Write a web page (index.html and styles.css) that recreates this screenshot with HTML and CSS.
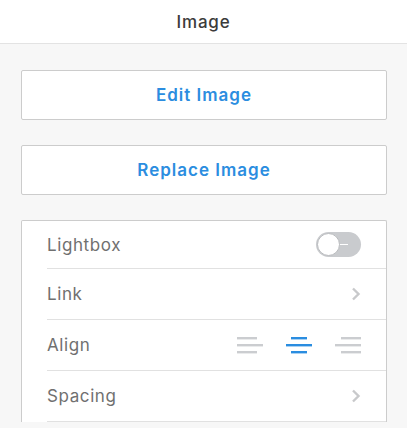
FILE: index.html
```html
<!DOCTYPE html>
<html>
<head>
<meta charset="utf-8">
<link rel="stylesheet" href="styles.css">
</head>
<body>
<header class="header">Image</header>
<main class="content">
  <button class="btn">Edit Image</button>
  <button class="btn">Replace Image</button>
  <section class="panel">
    <div class="row">
      <span class="label">Lightbox</span>
      <span class="toggle"><span class="knob"></span><span class="dash"></span></span>
    </div>
    <div class="row">
      <span class="label">Link</span>
      <svg class="chev" width="10" height="14" viewBox="0 0 10 14"><path d="M2 1.5 L7.5 7 L2 12.5" fill="none" stroke="#c8c9cb" stroke-width="2.4"/></svg>
    </div>
    <div class="row">
      <span class="label">Align</span>
      <div class="aligns">
        <svg width="26" height="18" viewBox="0 0 26 18"><g fill="#cbcdd0"><rect x="0" y="1" width="20" height="2.4"/><rect x="0" y="8" width="26" height="2.4"/><rect x="0" y="15" width="20" height="2.4"/></g></svg>
        <svg width="26" height="18" viewBox="0 0 26 18"><g fill="#2a8de0"><rect x="5" y="1" width="16" height="2.4"/><rect x="0" y="8" width="26" height="2.4"/><rect x="5" y="15" width="16" height="2.4"/></g></svg>
        <svg width="26" height="18" viewBox="0 0 26 18"><g fill="#cbcdd0"><rect x="6" y="1" width="20" height="2.4"/><rect x="0" y="8" width="26" height="2.4"/><rect x="6" y="15" width="20" height="2.4"/></g></svg>
      </div>
    </div>
    <div class="row">
      <span class="label">Spacing</span>
      <svg class="chev" width="10" height="14" viewBox="0 0 10 14"><path d="M2 1.5 L7.5 7 L2 12.5" fill="none" stroke="#c8c9cb" stroke-width="2.4"/></svg>
    </div>
  </section>
</main>
</body>
</html>
```
FILE: styles.css
```css
html, body {
  margin: 0;
  padding: 0;
  background: #f7f7f7;
  font-family: Inter, Lato, "Liberation Sans", sans-serif;
}
.header {
  height: 43px;
  background: #ffffff;
  border-bottom: 1px solid #e3e3e3;
  display: flex;
  align-items: center;
  justify-content: center;
  font-size: 17px;
  font-weight: 500;
  color: #3b3b3b;
  letter-spacing: 0.8px;
}
.content {
  padding: 26px 20px 0 21px;
  display: flex;
  flex-direction: column;
}
.btn {
  height: 50px;
  background: #fff;
  border: 1px solid #cccccc;
  border-radius: 2px;
  color: #2b8de0;
  font-family: inherit;
  font-size: 17px;
  font-weight: 600;
  letter-spacing: 1px;
  margin-bottom: 25px;
  padding: 0;
}
.panel {
  background: #fff;
  border: 1px solid #cccccc;
  border-bottom: none;
  border-radius: 2px 2px 0 0;
}
.row {
  height: 50px;
  margin-left: 25px;
  padding-right: 25px;
  border-bottom: 1px solid #e1e1e1;
  display: flex;
  align-items: center;
  justify-content: space-between;
}
.row:first-child {
  height: 47px;
}
.label {
  font-size: 17px;
  color: #707070;
  letter-spacing: 0.6px;
}
.toggle {
  position: relative;
  width: 45px;
  height: 25px;
  border-radius: 13px;
  background: #c9cbce;
}
.knob {
  position: absolute;
  left: 1px;
  top: 1px;
  width: 21px;
  height: 21px;
  border-radius: 50%;
  background: #fff;
  border: 1px solid #b9bbbe;
}
.dash {
  position: absolute;
  left: 24px;
  top: 12px;
  width: 8px;
  height: 1px;
  background: #fff;
}
.chev {
  display: block;
}
.aligns {
  display: flex;
  gap: 23px;
}
.aligns svg {
  display: block;
}
```
